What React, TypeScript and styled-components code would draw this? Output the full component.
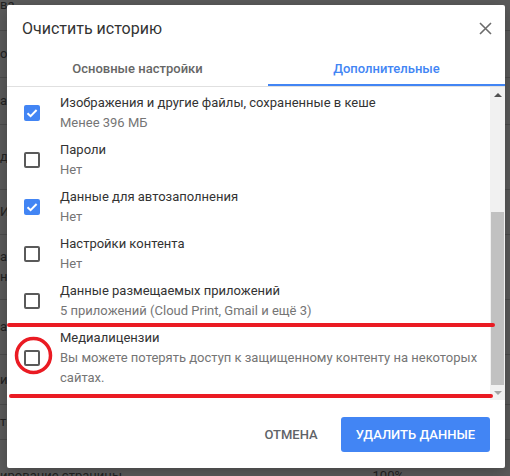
import React from "react";
import styled, { createGlobalStyle } from "styled-components";

const GlobalStyle = createGlobalStyle`
  html, body {
    margin: 0;
    padding: 0;
  }
  body {
    width: 510px;
    height: 476px;
    overflow: hidden;
    font-family: Roboto, "Liberation Sans", sans-serif;
  }
`;

const Page = styled.div`
  position: relative;
  width: 510px;
  height: 476px;
  overflow: hidden;
  background: #5b5b5b;
`;

// dimmed settings page behind the dialog
const Backdrop = styled.div`
  display: flex;
  flex-direction: column;
  margin-top: -20px;
`;

const BackRow = styled.div<{ $h: number; $line?: boolean }>`
  height: ${(p) => p.$h}px;
  box-sizing: border-box;
  display: flex;
  align-items: center;
  justify-content: space-between;
  padding-right: 106px;
  border-bottom: ${(p) => (p.$line ? "1px solid #4c4c4c" : "none")};
  font-size: 13px;
  line-height: 20px;
  color: #222;
`;

const BackText = styled.div`
  display: flex;
  flex-direction: column;
`;

const Dialog = styled.div`
  position: absolute;
  left: 7px;
  top: 5px;
  width: 498px;
  background: #fff;
  border-radius: 2px;
  display: flex;
  flex-direction: column;
  box-shadow: 0 4px 16px rgba(0, 0, 0, 0.25);
`;

const Header = styled.div`
  display: flex;
  align-items: center;
  justify-content: space-between;
  height: 46px;
  padding: 0 8px 0 15px;
`;

const Title = styled.h2`
  margin: 0;
  font-size: 16px;
  font-weight: 400;
  color: #333;
`;

const CloseButton = styled.button`
  width: 24px;
  height: 24px;
  padding: 0;
  border: 0;
  background: none;
  display: flex;
  align-items: center;
  justify-content: center;
  color: #6b6b6b;
  cursor: pointer;
`;

const TabBar = styled.div`
  display: flex;
  border-bottom: 1px solid #e0e0e0;
`;

const Tab = styled.div<{ $active?: boolean }>`
  flex: 1 1 auto;
  height: 35px;
  box-sizing: border-box;
  display: flex;
  align-items: center;
  justify-content: center;
  font-size: 13px;
  font-weight: 500;
  color: ${(p) => (p.$active ? "#4285f4" : "#666")};
  border-bottom: 2px solid ${(p) => (p.$active ? "#4285f4" : "transparent")};
  padding-top: 2px;
`;

const Body = styled.div`
  display: flex;
  height: 313px;
`;

const List = styled.div`
  flex: 1;
  display: flex;
  flex-direction: column;
  gap: 7px;
  padding: 6px 4px 0 17px;
  overflow: hidden;
`;

const Item = styled.div`
  display: flex;
  align-items: center;
  gap: 20px;
`;

const Box = styled.div<{ $checked?: boolean }>`
  flex: none;
  width: 16px;
  height: 16px;
  box-sizing: border-box;
  border-radius: 2px;
  border: ${(p) => (p.$checked ? "none" : "2px solid #5a5a5a")};
  background: ${(p) => (p.$checked ? "#4285f4" : "#fff")};
  display: flex;
  align-items: center;
  justify-content: center;
`;

const ItemText = styled.div`
  display: flex;
  flex-direction: column;
  font-size: 13px;
  line-height: 20px;
`;

const ItemTitle = styled.div`
  color: #333;
`;

const ItemSub = styled.div`
  color: #757575;
`;

const Scrollbar = styled.div`
  flex: none;
  width: 15px;
  background: #f1f1f1;
  display: flex;
  flex-direction: column;
`;

const ScrollArrow = styled.div<{ $down?: boolean }>`
  height: 15px;
  display: flex;
  align-items: center;
  justify-content: center;

  &::after {
    content: "";
    border-left: 4px solid transparent;
    border-right: 4px solid transparent;
    ${(p) =>
      p.$down
        ? "border-top: 4px solid #a3a3a3;"
        : "border-bottom: 4px solid #505050;"}
  }
`;

const ScrollSpace = styled.div`
  flex: 1;
`;

const Thumb = styled.div`
  height: 173px;
  margin: 0 1px;
  background: #c1c1c1;
`;

const Footer = styled.div`
  display: flex;
  justify-content: flex-end;
  align-items: center;
  gap: 7px;
  padding: 17px 15px 16px;
`;

const TextButton = styled.button`
  height: 35px;
  padding: 0 16px;
  border: 0;
  background: none;
  font-family: Roboto, "Liberation Sans", sans-serif;
  font-size: 13px;
  font-weight: 500;
  color: #5f6368;
  cursor: pointer;
`;

const PrimaryButton = styled(TextButton)`
  background: #4285f4;
  color: #fff;
  border-radius: 3px;
  padding: 0 15px;
`;

const Annotations = styled.svg`
  position: absolute;
  left: 0;
  top: 0;
  pointer-events: none;
`;

type Entry = { title: string; sub: string; checked?: boolean };

const entries: Entry[] = [
  { title: "Изображения и другие файлы, сохраненные в кеше", sub: "Менее 396 МБ", checked: true },
  { title: "Пароли", sub: "Нет" },
  { title: "Данные для автозаполнения", sub: "Нет", checked: true },
  { title: "Настройки контента", sub: "Нет" },
  { title: "Данные размещаемых приложений", sub: "5 приложений (Cloud Print, Gmail и ещё 3)" },
  {
    title: "Медиалицензии",
    sub: "Вы можете потерять доступ к защищенному контенту на некоторых сайтах.",
  },
];

const backRows: { h: number; lines: string[]; right?: string; line?: boolean }[] = [
  { h: 51, lines: ["ва"], line: true },
  { h: 47, lines: ["ол"], line: true },
  { h: 47, lines: ["а"], line: true },
  { h: 65, lines: ["д"], line: true },
  { h: 45, lines: ["И"], line: true },
  { h: 65, lines: ["ат", "нс"], line: true },
  { h: 55, lines: ["ат"], line: true },
  { h: 50, lines: ["ир"], line: true },
  { h: 35, lines: ["ть"], line: true },
  { h: 72, lines: ["ирование страницы"], right: "100%" },
];

function Check() {
  return (
    <svg width="12" height="12" viewBox="0 0 12 12">
      <path d="M1.5 6.2 L4.6 9.2 L10.6 3" fill="none" stroke="#fff" strokeWidth="2" />
    </svg>
  );
}

export default function App() {
  return (
    <Page>
      <GlobalStyle />
      <Backdrop>
        {backRows.map((r, i) => (
          <BackRow key={i} $h={r.h} $line={r.line}>
            <BackText>
              {r.lines.map((l) => (
                <span key={l}>{l}</span>
              ))}
            </BackText>
            {r.right && <span>{r.right}</span>}
          </BackRow>
        ))}
      </Backdrop>

      <Dialog>
        <Header>
          <Title>Очистить историю</Title>
          <CloseButton aria-label="Закрыть">
            <svg width="13" height="13" viewBox="0 0 13 13">
              <path d="M1 1 L12 12 M12 1 L1 12" stroke="currentColor" strokeWidth="1.6" />
            </svg>
          </CloseButton>
        </Header>
        <TabBar>
          <Tab>Основные настройки</Tab>
          <Tab $active>Дополнительные</Tab>
        </TabBar>
        <Body>
          <List>
            {entries.map((e) => (
              <Item key={e.title}>
                <Box $checked={e.checked}>{e.checked && <Check />}</Box>
                <ItemText>
                  <ItemTitle>{e.title}</ItemTitle>
                  <ItemSub>{e.sub}</ItemSub>
                </ItemText>
              </Item>
            ))}
          </List>
          <Scrollbar>
            <ScrollArrow />
            <ScrollSpace />
            <Thumb />
            <ScrollArrow $down />
          </Scrollbar>
        </Body>
        <Footer>
          <TextButton>ОТМЕНА</TextButton>
          <PrimaryButton>УДАЛИТЬ ДАННЫЕ</PrimaryButton>
        </Footer>
      </Dialog>

      <Annotations width="510" height="476">
        <line x1="9" y1="325" x2="493" y2="325" stroke="#ea1b23" strokeWidth="4" strokeLinecap="round" />
        <circle cx="33.5" cy="355.5" r="17" fill="none" stroke="#ea1b23" strokeWidth="3.5" />
        <line x1="11" y1="396" x2="491" y2="396" stroke="#ea1b23" strokeWidth="4" strokeLinecap="round" />
      </Annotations>
    </Page>
  );
}
